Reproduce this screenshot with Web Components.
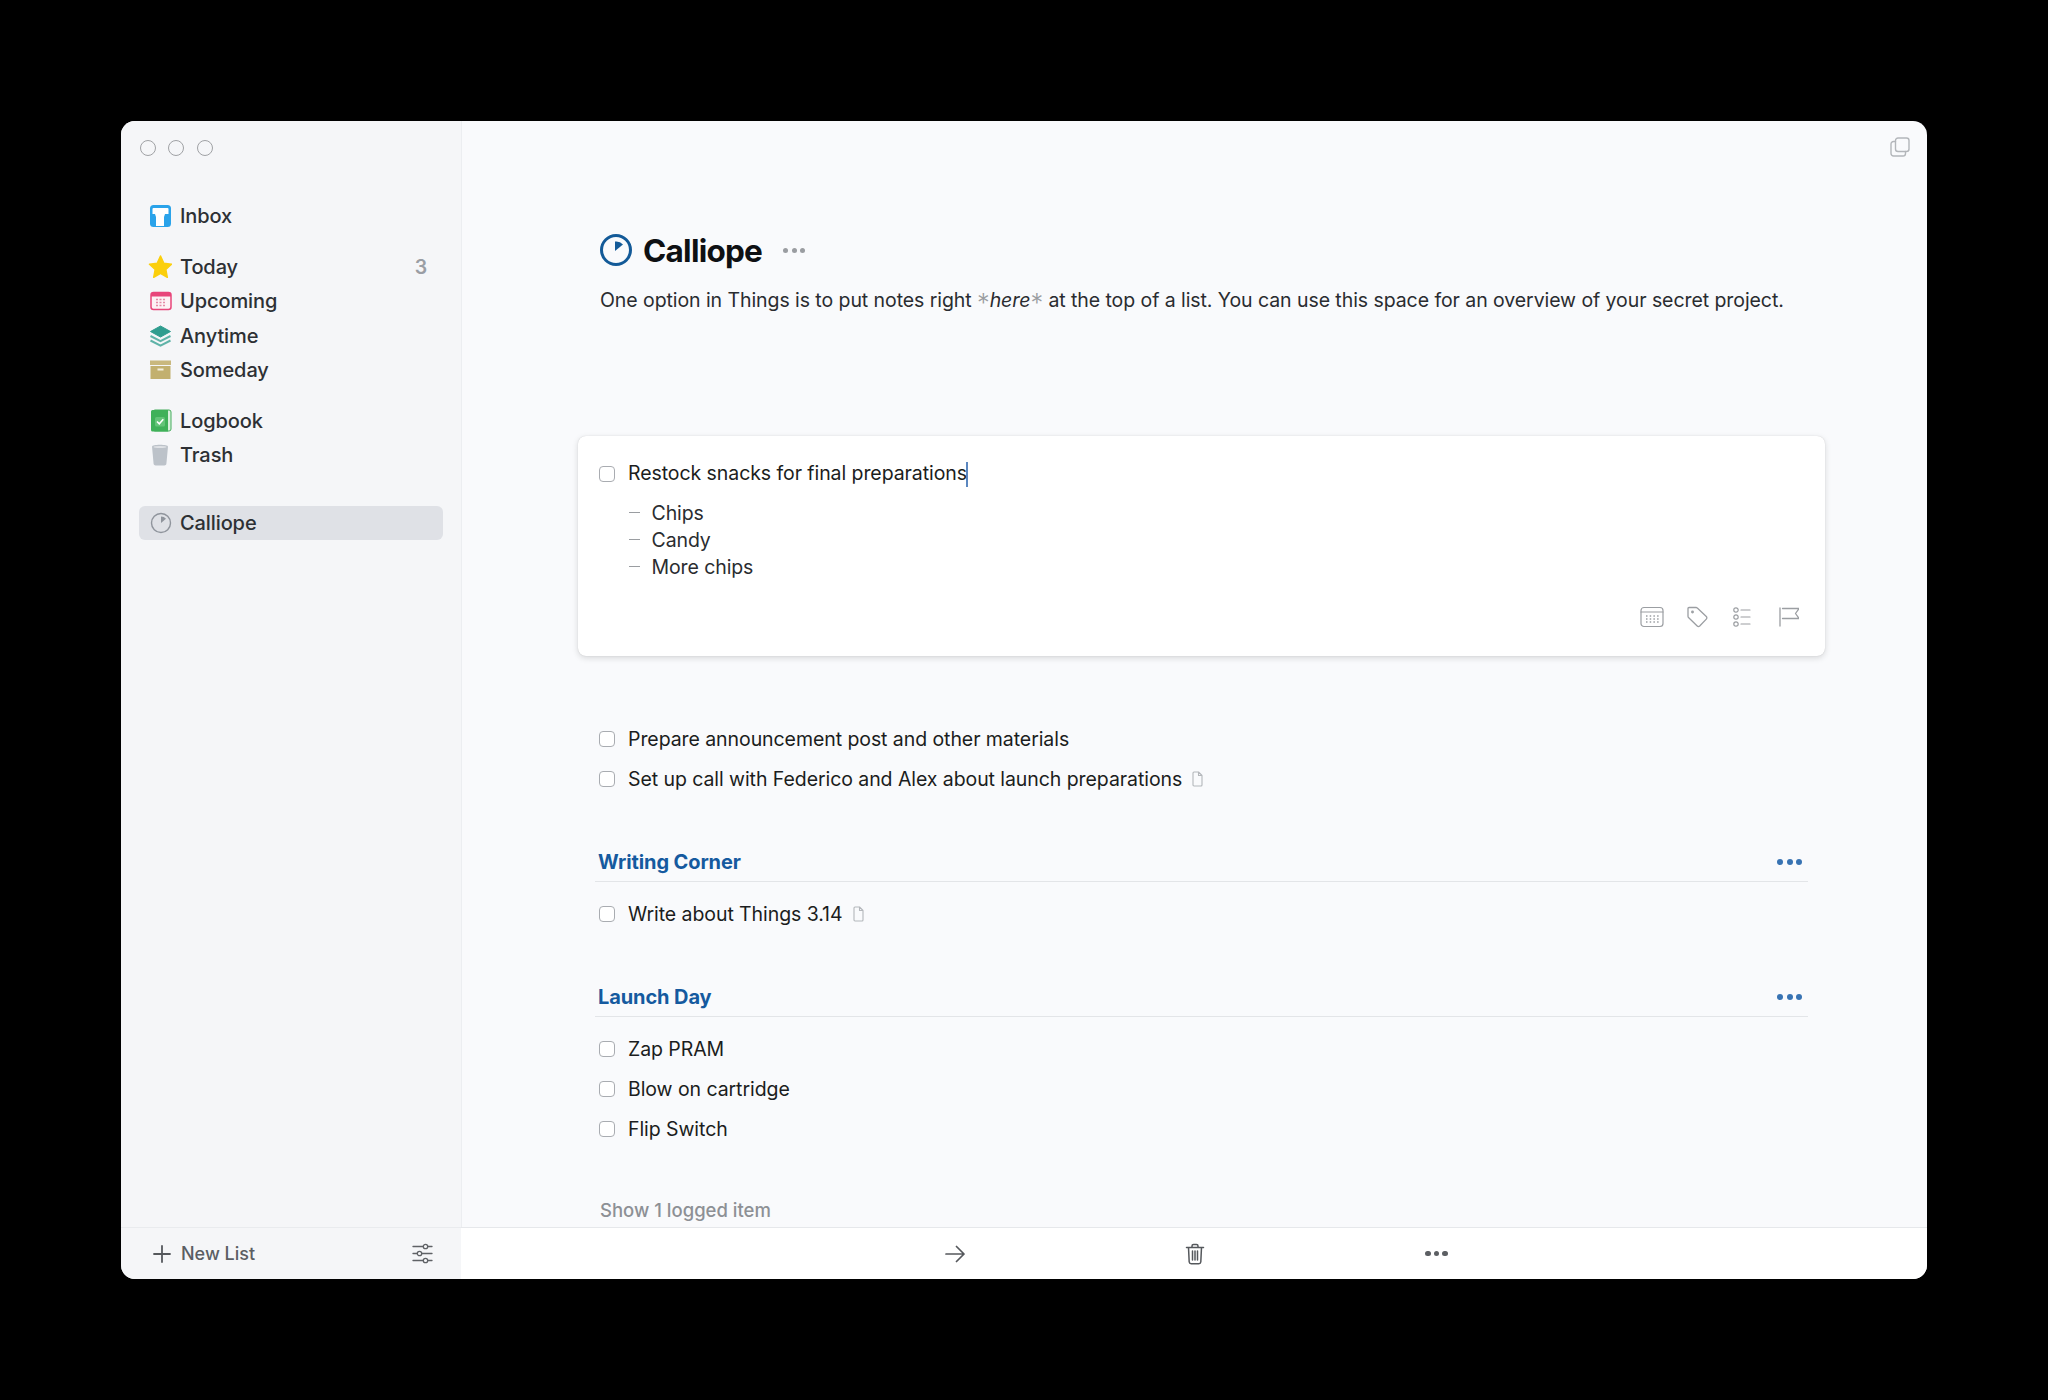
<!DOCTYPE html>
<html lang="en"><head><meta charset="utf-8"><title>Things - Calliope</title>
<style>
html,body{margin:0;background:#000;height:100%}
body{font-family:Inter,"Liberation Sans",sans-serif;padding:121px;box-sizing:border-box;width:2048px;height:1400px;overflow:hidden}
svg{display:block}
list-notes em{font-style:italic}
list-notes .x{font-style:normal;color:#9a9da1;font-size:1.300em;line-height:0;vertical-align:-.2em;font-weight:300}
</style></head><body>
<things-window>
  <side-bar slot="side">
    <nav-group>
      <nav-item><svg slot="icon" width="24" height="24" viewBox="0 0 24 24"><rect x="2" y="1" width="21" height="22" rx="3.500" fill="#2aa3ea"/><path d="M5.500 4h14a1 1 0 0 1 1 1v5h-3.500l-1 3v9h-8v-9l-1-3H4.500V5a1 1 0 0 1 1-1z" fill="#fff"/></svg>Inbox</nav-item>
    </nav-group>
    <nav-group>
      <nav-item count="3"><svg slot="icon" width="24" height="24" viewBox="0 0 24 24"><path d="M12.500 1l3.300 7.300 7.700.9-5.700 5.300 1.500 7.800-6.800-3.900-6.800 3.900 1.500-7.800L1.500 9.200l7.700-.9z" fill="#fbcf0c" stroke="#fbcf0c" stroke-width="1.500" stroke-linejoin="round"/></svg>Today</nav-item>
      <nav-item><svg slot="icon" width="24" height="24" viewBox="0 0 24 24"><rect x="3" y="3.500" width="20" height="17" rx="2.500" fill="#fdf2f5" stroke="#e8457a" stroke-width="1.500"/><path d="M3 7.500V6a2.500 2.500 0 0 1 2.500-2.500h15A2.500 2.500 0 0 1 23 6v1.500z" fill="#e8457a"/><path d="M8 10.500h2m1.500 0h2m1.500 0h2M8 13.500h2m1.500 0h2m1.500 0h2M8 16.500h2m1.500 0h2m1.500 0h2" stroke="#e58aa6" stroke-width="1.500"/></svg>Upcoming</nav-item>
      <nav-item><svg slot="icon" width="24" height="24" viewBox="0 0 24 24"><path d="M12.500 2l10 5.500-10 5.500-10-5.500z" fill="#2f9d8f" stroke="#2f9d8f" stroke-linejoin="round"/><path d="M2.500 12l10 5.200 10-5.200M2.500 16.500l10 5.200 10-5.200" fill="none" stroke="#5fb3a8" stroke-width="2"/></svg>Anytime</nav-item>
      <nav-item><svg slot="icon" width="24" height="24" viewBox="0 0 24 24"><rect x="2" y="2.500" width="21" height="4.500" fill="#c9b87e"/><rect x="2.500" y="8" width="20" height="13" fill="#c2b06f"/><rect x="9.500" y="10.500" width="6" height="2" fill="#f3efdd"/></svg>Someday</nav-item>
    </nav-group>
    <nav-group>
      <nav-item><svg slot="icon" width="24" height="24" viewBox="0 0 24 24"><rect x="5" y="1" width="18" height="21" rx="2" fill="#d8efdc" stroke="#45ad5c" stroke-width="1"/><path d="M3 2.500A1.500 1.500 0 0 1 4.500 1H20v21.500H4.500A1.500 1.500 0 0 1 3 21z" fill="#3fb159"/><rect x="7" y="8" width="10" height="9.500" rx="1.500" fill="#63c478"/><path d="M9 12.500l2.300 2.300 4-4.600" fill="none" stroke="#fff" stroke-width="1.600"/></svg>Logbook</nav-item>
      <nav-item><svg slot="icon" width="24" height="24" viewBox="0 0 24 24"><path d="M4 3.500c0-1 3.500-1.800 8-1.800s8 .8 8 1.800l-1.600 17.300c-.1 1-1.100 1.700-2 1.700H7.600c-.9 0-1.900-.7-2-1.700z" fill="#bcc2c9"/><ellipse cx="12" cy="4" rx="6.500" ry="1" fill="#dfe2e6"/></svg>Trash</nav-item>
    </nav-group>
    <nav-group>
      <nav-item selected><svg slot="icon" width="24" height="24" viewBox="0 0 24 24"><circle cx="13" cy="12" r="9.500" fill="none" stroke="#8f949c" stroke-width="1.400"/><path d="M13 5.500v6.500l5-4.200A6.500 6.500 0 0 0 13 5.500z" fill="#8f949c"/></svg>Calliope</nav-item>
    </nav-group>
    <side-footer slot="footer"></side-footer>
  </side-bar>
  <main-pane slot="main">
    <list-title>Calliope</list-title>
    <list-notes>One option in Things is to put notes right <i class="x">*</i><em>here</em><i class="x">*</i> at the top of a list. You can use this space for an overview of your secret project.</list-notes>
    <task-card>
      <check-item slot="title">Restock snacks for final preparations<span class="caret"></span></check-item>
      <li-note>Chips</li-note>
      <li-note>Candy</li-note>
      <li-note>More chips</li-note>
    </task-card>
    <task-list style="margin-top:63px">
      <check-item>Prepare announcement post and other materials</check-item>
      <check-item note>Set up call with Federico and Alex about launch preparations</check-item>
    </task-list>
    <section-head style="margin-top:44.500px">Writing Corner</section-head>
    <task-list style="margin-top:11.500px">
      <check-item note>Write about Things 3.14</check-item>
    </task-list>
    <section-head style="margin-top:44.500px">Launch Day</section-head>
    <task-list style="margin-top:11.500px">
      <check-item>Zap PRAM</check-item>
      <check-item>Blow on cartridge</check-item>
      <check-item>Flip Switch</check-item>
    </task-list>
    <logged-link>Show 1 logged item</logged-link>
  </main-pane>
</things-window>
<script>
function def(name, html, setup){
  customElements.define(name, class extends HTMLElement{
    constructor(){super();this.attachShadow({mode:'open'}).innerHTML=html;}
    connectedCallback(){ if(setup) setup(this, this.shadowRoot); }
  });
}
const ICON='fill="none" stroke-linecap="round" stroke-linejoin="round"';

def('things-window',`<style>
:host{display:flex;width:1806px;height:1158px;border-radius:14px;overflow:hidden;background:#f9fafc;color:#25272b}
.s{display:flex;width:340px;flex:none}.m{display:flex;flex:1;min-width:0}
::slotted(*){flex:1}
</style><div class="s"><slot name="side"></slot></div><div class="m"><slot name="main"></slot></div>`);

def('side-bar',`<style>
:host{display:flex;flex-direction:column;background:#f5f6f8;border-right:1px solid #eceef1;box-sizing:border-box}
.lights{display:flex;gap:12.500px;padding:19px 0 0 18.500px;height:78px;box-sizing:border-box}
.lights i{width:16px;height:16px;border-radius:50%;border:1.400px solid #a0a2a5;box-sizing:border-box}
.g{flex:1;display:flex;flex-direction:column;gap:16.500px;padding:0 18px}
::slotted(nav-group:last-of-type){margin-top:17px}
</style><div class="lights"><i></i><i></i><i></i></div><div class="g"><slot></slot></div><slot name="footer"></slot>`);

def('nav-group',`<style>:host{display:block}</style><slot></slot>`);

def('nav-item',`<style>
:host{display:flex;align-items:center;height:34.300px;width:304px;padding:0 16px 0 9px;gap:8px;box-sizing:border-box;border-radius:6px;
 font-size:20px;font-weight:500;color:#2d3034;letter-spacing:-.1px}
:host([selected]){background:#dfe1e6}
.i{width:24px;height:24px;flex:none}
.t{flex:1}
.c{color:#9a9ea4;font-weight:600;font-size:19.500px}
</style><span class="i"><slot name="icon"></slot></span><span class="t"><slot></slot></span><span class="c"></span>`,
(el,r)=>{r.querySelector('.c').textContent=el.getAttribute('count')||'';});

def('side-footer',`<style>
:host{display:flex;align-items:center;height:52px;border-top:1px solid #e9ebee;box-sizing:border-box;padding:0 28px 0 32px;font-size:18px;color:#5b5e63;font-weight:500;gap:10px}
span{flex:1}
</style>
<svg width="18" height="18" viewBox="0 0 18 18" ${ICON} stroke="#55585c" stroke-width="1.800"><path d="M9 1v16M1 9h16"/></svg>
<span>New List</span>
<svg width="21" height="21" viewBox="0 0 21 21" ${ICON} stroke="#5f6266" stroke-width="1.300"><path d="M1 3.500h10M16 3.500h4M1 10.500h4M10 10.500h10M1 17.500h10M16 17.500h4"/><circle cx="13.500" cy="3.500" r="2.200"/><circle cx="7.500" cy="10.500" r="2.200"/><circle cx="13.500" cy="17.500" r="2.200"/></svg>`);

def('main-pane',`<style>
:host{display:flex;flex-direction:column;min-width:0;position:relative}
.c{flex:1;padding:109px 102px 0 117px;overflow:hidden;display:flex;flex-direction:column;min-height:0}
.copy{position:absolute;top:16px;right:17px}
.bar{flex:none;height:52px;background:#fff;border-top:1px solid #e6e8eb;box-sizing:border-box;display:flex;align-items:center;gap:220px;padding-left:484px}
.dots{display:flex;gap:3px}
.dots i{width:5.500px;height:5.500px;border-radius:50%;background:#5c5f63;flex:none}
</style>
<svg class="copy" width="20" height="20" viewBox="0 0 20 20" ${ICON} stroke="#b3b6ba" stroke-width="1.400"><rect x="5.500" y="1" width="13.500" height="13.500" rx="2.500"/><path d="M5.500 4.500H3.500A2.500 2.500 0 0 0 1 7v9.500A2.500 2.500 0 0 0 3.500 19H13a2.500 2.500 0 0 0 2.500-2.500v-2"/></svg>
<div class="c"><slot></slot></div>
<div class="bar">
<svg width="20" height="20" viewBox="0 0 20 20" ${ICON} stroke="#55585c" stroke-width="1.700"><path d="M1 10h18M11.500 2.500L19 10l-7.500 7.500"/></svg>
<svg width="20" height="22" viewBox="0 0 20 22" ${ICON} stroke="#55585c" stroke-width="1.500"><path d="M1.500 4.500h17M7 4.500V3a1.500 1.500 0 0 1 1.500-1.500h3A1.500 1.500 0 0 1 13 3v1.500M3.500 4.500l.7 14.500a2 2 0 0 0 2 1.800h7.600a2 2 0 0 0 2-1.800l.7-14.500M7.500 8v9M10 8v9M12.500 8v9"/></svg>
<span class="dots"><i></i><i></i><i></i></span>
</div>`);

def('list-title',`<style>
:host{display:flex;align-items:center;height:40px;padding-left:22px;font-size:31.500px;font-weight:700;color:#0e1013;letter-spacing:-.75px;gap:11px;flex:none}
.d{display:flex;gap:3.500px;margin-left:10px}.d i{width:5px;height:5px;border-radius:50%;background:#9a9da1}
</style>
<svg width="32" height="32" viewBox="0 0 32 32"><circle cx="16" cy="16" r="14.500" fill="none" stroke="#135a98" stroke-width="3"/><path d="M15 7.500v9.500l8-6.500A9 9 0 0 0 15 7.500z" fill="#135a98"/></svg>
<span><slot></slot></span><span class="d"><i></i><i></i><i></i></span>`);

def('list-notes',`<style>
:host{display:block;margin:15.500px 0 0 22px;font-size:19.500px;line-height:28px;color:#2a2c30;white-space:nowrap;letter-spacing:-.07px;flex:none}
</style><slot></slot>`);

def('task-card',`<style>
:host{display:block;margin-top:122px;height:220px;box-sizing:border-box;background:#fff;border-radius:8px;box-shadow:0 0 1px rgba(0,0,0,.18),0 2px 6px rgba(0,0,0,.14);padding:25px 20px 0 20.500px;position:relative;flex:none}
.n{display:flex;flex-direction:column;padding:11.500px 0 0 30px}
.tools{position:absolute;left:1062px;top:170px;display:flex;align-items:center;gap:22px}
.tools svg{flex:none}
</style>
<slot name="title"></slot><div class="n"><slot></slot></div>
<div class="tools">
<svg width="24" height="22" viewBox="0 0 24 22" ${ICON} stroke="#9b9ea2" stroke-width="1.200"><rect x="1" y="1.500" width="22" height="19" rx="3"/><path d="M1 6h22"/><path stroke-dasharray="1.500 2.200" stroke-width="1.500" stroke-linecap="butt" d="M6 10h13M6 13h13M6 16h13"/></svg>
<svg width="23" height="22" viewBox="0 0 23 22" ${ICON} stroke="#9b9ea2" stroke-width="1.300"><path d="M2 2.500a1 1 0 0 1 1-1h7c.5 0 1 .2 1.300.5l9 8.500a1.800 1.800 0 0 1 0 2.600l-6.600 6.900a1.800 1.800 0 0 1-2.500 0L2.500 11.500c-.3-.3-.5-.8-.5-1.200z"/><circle cx="6.500" cy="6" r=".8"/></svg>
<svg width="18" height="20" viewBox="0 0 18 20" ${ICON} stroke="#9b9ea2" stroke-width="1.200" style="margin-left:2px"><circle cx="3" cy="3" r="2.200"/><circle cx="3" cy="10" r="2.200"/><circle cx="3" cy="17" r="2.200"/><path d="M8 3h9M8 10h9M8 17h9"/></svg>
<svg width="20" height="20" viewBox="0 0 20 20" ${ICON} stroke="#9b9ea2" stroke-width="1.300" style="margin-left:6px"><path d="M1 1v18M3.500 1.500H20l-3.500 5 3.500 5H3.500"/></svg>
</div>`);

def('task-list',`<style>:host{display:flex;flex-direction:column;flex:none}</style><slot></slot>`);

def('check-item',`<style>
:host{display:flex;align-items:center;height:40px;padding-left:20.500px;font-size:19.500px;color:#1b1d20;letter-spacing:-.07px;gap:13.500px;flex:none}
:host([slot=title]){padding-left:0;height:27px}
.b{width:16px;height:16px;border:1.500px solid #a9acb1;border-radius:4px;box-sizing:border-box;background:#fff;flex:none}
::slotted(.caret){display:inline-block;width:2px;height:25px;background:#5b87c0;vertical-align:middle;margin-left:-1px}
.n{display:none;margin-left:-3.500px}
:host([note]) .n{display:block}
</style><span class="b"></span><span><slot></slot></span>
<svg class="n" width="11" height="16" viewBox="0 0 11 16" ${ICON} stroke="#b4b7bb" stroke-width="1.100"><path d="M1 2a1 1 0 0 1 1-1h4.500L10 4.500V14a1 1 0 0 1-1 1H2a1 1 0 0 1-1-1zM6.500 1v3.500H10"/></svg>`);

def('li-note',`<style>
:host{display:flex;align-items:center;height:27px;font-size:19.500px;color:#2a2c30;letter-spacing:-.1px}
b{display:block;width:11px;height:1.500px;background:#9a9da1;margin-right:12px}
</style><b></b><slot></slot>`);

def('section-head',`<style>
:host{display:flex;align-items:center;justify-content:space-between;height:38px;margin-left:17px;margin-right:17px;padding:0 6px 0 3px;border-bottom:1.500px solid #e3e5e8;font-size:20px;font-weight:700;color:#155a9f;letter-spacing:-.1px;flex:none}
.d{display:flex;gap:3.500px}.d i{width:6px;height:6px;border-radius:50%;background:#3873b3}
</style><span><slot></slot></span><span class="d"><i></i><i></i><i></i></span>`);

def('logged-link',`<style>
:host{display:block;margin:47px 0 0 22px;font-size:18.500px;font-weight:500;color:#8d9095;line-height:28px;flex:none}
</style><slot></slot>`);
</script>
</body></html>
